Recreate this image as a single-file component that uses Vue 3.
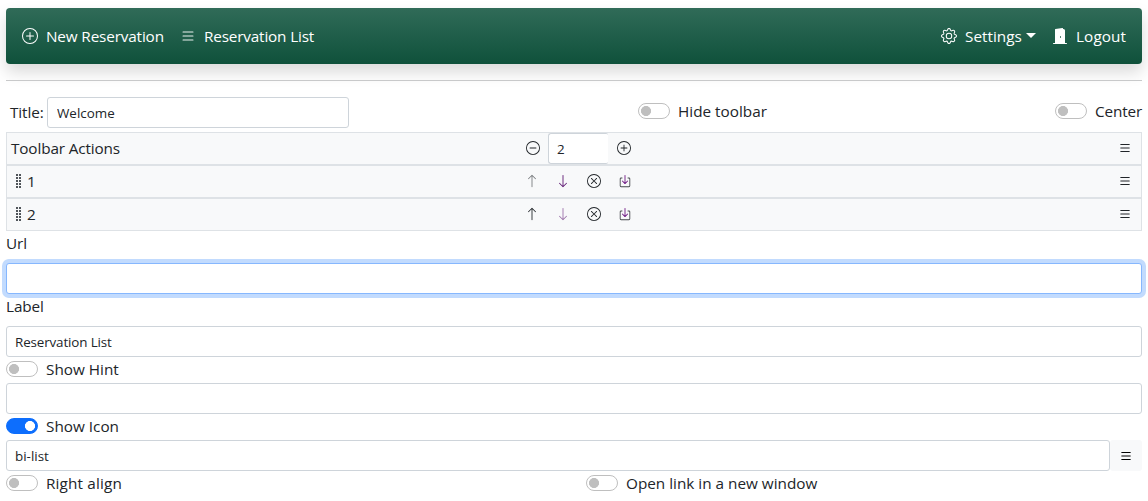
<script setup>
import { ref } from 'vue'

const icons = {
  plus: ['M8 15A7 7 0 1 1 8 1a7 7 0 0 1 0 14m0 1A8 8 0 1 0 8 0a8 8 0 0 0 0 16', 'M8 4a.5.5 0 0 1 .5.5v3h3a.5.5 0 0 1 0 1h-3v3a.5.5 0 0 1-1 0v-3h-3a.5.5 0 0 1 0-1h3v-3A.5.5 0 0 1 8 4'],
  dash: ['M8 15A7 7 0 1 1 8 1a7 7 0 0 1 0 14m0 1A8 8 0 1 0 8 0a8 8 0 0 0 0 16', 'M4 8a.5.5 0 0 1 .5-.5h7a.5.5 0 0 1 0 1h-7A.5.5 0 0 1 4 8'],
  close: ['M8 15A7 7 0 1 1 8 1a7 7 0 0 1 0 14m0 1A8 8 0 1 0 8 0a8 8 0 0 0 0 16', 'M4.646 4.646a.5.5 0 0 1 .708 0L8 7.293l2.646-2.647a.5.5 0 0 1 .708.708L8.707 8l2.647 2.646a.5.5 0 0 1-.708.708L8 8.707l-2.646 2.647a.5.5 0 0 1-.708-.708L7.293 8 4.646 5.354a.5.5 0 0 1 0-.708'],
  list: ['M2.5 12a.5.5 0 0 1 .5-.5h10a.5.5 0 0 1 0 1H3a.5.5 0 0 1-.5-.5m0-4a.5.5 0 0 1 .5-.5h10a.5.5 0 0 1 0 1H3a.5.5 0 0 1-.5-.5m0-4a.5.5 0 0 1 .5-.5h10a.5.5 0 0 1 0 1H3a.5.5 0 0 1-.5-.5'],
  up: ['M8 15a.5.5 0 0 0 .5-.5V2.707l3.146 3.147a.5.5 0 0 0 .708-.708l-4-4a.5.5 0 0 0-.708 0l-4 4a.5.5 0 1 0 .708.708L7.5 2.707V14.5a.5.5 0 0 0 .5.5'],
  down: ['M8 1a.5.5 0 0 1 .5.5v11.793l3.146-3.147a.5.5 0 0 1 .708.708l-4 4a.5.5 0 0 1-.708 0l-4-4a.5.5 0 0 1 .708-.708L7.5 13.293V1.5A.5.5 0 0 1 8 1'],
  insert: ['M3.5 4A1.5 1.5 0 0 0 2 5.5v8A1.5 1.5 0 0 0 3.5 15h9a1.5 1.5 0 0 0 1.500-1.500v-8A1.5 1.5 0 0 0 12.500 4H11v1h1.500a.5.5 0 0 1 .5.5v8a.5.5 0 0 1-.5.5h-9a.5.5 0 0 1-.5-.5v-8a.5.5 0 0 1 .5-.5H5V4z', 'M7.646 11.354a.5.5 0 0 0 .708 0l3-3a.5.5 0 0 0-.708-.708L8.500 9.793V1.500a.5.5 0 0 0-1 0v8.293L5.354 7.646a.5.5 0 1 0-.708.708z'],
  gear: ['M8 4.754a3.246 3.246 0 1 0 0 6.492 3.246 3.246 0 0 0 0-6.492M5.754 8a2.246 2.246 0 1 1 4.492 0 2.246 2.246 0 0 1-4.492 0', 'M9.796 1.343c-.527-1.790-3.065-1.790-3.592 0l-.094.319a.873.873 0 0 1-1.255.52l-.292-.16c-1.640-.892-3.433.902-2.540 2.541l.159.292a.873.873 0 0 1-.52 1.255l-.319.094c-1.790.527-1.790 3.065 0 3.592l.319.094a.873.873 0 0 1 .52 1.255l-.16.292c-.892 1.640.901 3.434 2.541 2.540l.292-.159a.873.873 0 0 1 1.255.52l.094.319c.527 1.790 3.065 1.790 3.592 0l.094-.319a.873.873 0 0 1 1.255-.52l.292.16c1.640.893 3.434-.902 2.540-2.541l-.159-.292a.873.873 0 0 1 .52-1.255l.319-.094c1.790-.527 1.790-3.065 0-3.592l-.319-.094a.873.873 0 0 1-.52-1.255l.16-.292c.893-1.640-.902-3.433-2.541-2.540l-.292.159a.873.873 0 0 1-1.255-.52zm-2.633.283c.246-.835 1.428-.835 1.674 0l.094.319a1.873 1.873 0 0 0 2.693 1.115l.291-.16c.764-.415 1.600.42 1.184 1.185l-.159.292a1.873 1.873 0 0 0 1.116 2.692l.318.094c.835.246.835 1.428 0 1.674l-.319.094a1.873 1.873 0 0 0-1.115 2.693l.16.291c.415.764-.42 1.600-1.185 1.184l-.291-.159a1.873 1.873 0 0 0-2.693 1.116l-.094.318c-.246.835-1.428.835-1.674 0l-.094-.319a1.873 1.873 0 0 0-2.692-1.115l-.292.16c-.764.415-1.600-.42-1.184-1.185l.159-.291A1.873 1.873 0 0 0 1.945 8.930l-.319-.094c-.835-.246-.835-1.428 0-1.674l.319-.094A1.873 1.873 0 0 0 3.060 4.377l-.16-.292c-.415-.764.42-1.600 1.185-1.184l.292.159a1.873 1.873 0 0 0 2.692-1.115z'],
  door: ['M1.500 15a.5.5 0 0 0 0 1h13a.5.5 0 0 0 0-1H13V2.500A1.500 1.500 0 0 0 11.500 1H11V.5a.5.5 0 0 0-.57-.495l-7 1A.5.5 0 0 0 3 1.500V15zM8.500 10c-.276 0-.5-.448-.5-1s.224-1 .5-1 .5.448.5 1-.224 1-.5 1'],
}

const title = ref('Welcome')
const count = ref('2')
const url = ref('')
const label = ref('Reservation List')
const hint = ref('')
const iconName = ref('bi-list')
const rows = [
  { id: 1, first: true, last: false },
  { id: 2, first: false, last: true },
]
</script>

<template>
  <main class="page">
    <nav class="navbar">
      <a class="nav-link"><svg class="icon nav-icon" viewBox="0 0 16 16"><path v-for="d in icons.plus" :key="d" :d="d" /></svg><span class="t-new">New Reservation</span></a>
      <a class="nav-link"><svg class="icon nav-icon soft" viewBox="0 0 16 16"><path v-for="d in icons.list" :key="d" :d="d" /></svg><span class="t-list">Reservation List</span></a>
      <a class="nav-link settings"><svg class="icon nav-icon" viewBox="0 0 16 16"><path v-for="d in icons.gear" :key="d" :d="d" /></svg><span class="t-settings">Settings</span><i class="caret"></i></a>
      <a class="nav-link logout"><svg class="icon nav-icon" viewBox="0 0 16 16"><path v-for="d in icons.door" :key="d" :d="d" /></svg><span class="t-logout">Logout</span></a>
    </nav>
    <div class="rule"></div>

    <div class="title-row">
      <label class="title-label">Title:</label>
      <input v-model="title" class="field title-input" />
      <div class="check hide-check"><i class="switch"></i><span>Hide toolbar</span></div>
      <div class="check center-check"><i class="switch"></i><span class="t-center">Center</span></div>
    </div>

    <div class="actions">
      <div class="bar">
        <span class="bar-name">Toolbar Actions</span>
        <span class="cell"><svg class="icon" viewBox="0 0 16 16"><path v-for="d in icons.dash" :key="d" :d="d" /></svg></span>
        <input v-model="count" class="field count" />
        <span class="cell"><svg class="icon" viewBox="0 0 16 16"><path v-for="d in icons.plus" :key="d" :d="d" /></svg></span>
        <span class="cell menu"><svg class="icon" viewBox="0 0 16 16"><path v-for="d in icons.list" :key="d" :d="d" /></svg></span>
      </div>
      <div v-for="row in rows" :key="row.id" class="bar">
        <span class="bar-name item"><i class="grip"></i>{{ row.id }}</span>
        <span class="cell" :class="{ disabled: row.first }"><svg class="icon" viewBox="0 0 16 16"><path :d="icons.up[0]" /></svg></span>
        <span class="cell purple" :class="{ disabled: row.last }"><svg class="icon" viewBox="0 0 16 16"><path :d="icons.down[0]" /></svg></span>
        <span class="cell"><svg class="icon" viewBox="0 0 16 16"><path v-for="d in icons.close" :key="d" :d="d" /></svg></span>
        <span class="cell"><svg class="icon" viewBox="0 0 16 16"><path class="frame" :d="icons.insert[0]" /><path class="violet" :d="icons.insert[1]" /></svg></span>
        <span class="cell menu"><svg class="icon" viewBox="0 0 16 16"><path v-for="d in icons.list" :key="d" :d="d" /></svg></span>
      </div>
    </div>

    <label class="form-label">Url</label>
    <input v-model="url" class="field wide focused" />
    <label class="form-label">Label</label>
    <input v-model="label" class="field wide" />
    <div class="check"><i class="switch"></i><span>Show Hint</span></div>
    <input v-model="hint" class="field wide" />
    <div class="check"><i class="switch on"></i><span>Show Icon</span></div>
    <div class="group">
      <input v-model="iconName" class="field" />
      <button class="pick"><svg class="icon" viewBox="0 0 16 16"><path v-for="d in icons.list" :key="d" :d="d" /></svg></button>
    </div>
    <div class="bottom">
      <div class="check"><i class="switch"></i><span class="t-align">Right align</span></div>
      <div class="check"><i class="switch"></i><span>Open link in a new window</span></div>
    </div>
  </main>
</template>

<style>
body { margin: 0; background: #fff; overflow: hidden; }
</style>

<style scoped>
* { box-sizing: border-box; }
.page { padding: 8px 6px 0; font-family: "Open Sans", "Noto Sans", sans-serif; font-size: 15.3px; line-height: 24px; color: #212529; }
.icon { display: block; width: 14px; height: 14px; fill: currentColor; flex: none; }
.navbar { display: flex; align-items: center; height: 56px; padding: 0 16px; border-radius: 4px; background: linear-gradient(180deg, #306b58, #0f513b); box-shadow: 0 8px 16px rgba(0, 0, 0, .15); color: #fff; }
.nav-link { display: flex; align-items: center; height: 24px; margin-right: 16px; white-space: nowrap; }
.nav-icon { width: 16px; height: 16px; margin-right: 8px; }
.soft { opacity: .9; }
.t-new { width: 118px; letter-spacing: -.15px; }
.t-list { width: 110px; letter-spacing: -.17px; }
.t-settings { width: 57px; }
.t-logout { width: 50px; letter-spacing: .1px; }
.settings { margin-left: auto; }
.logout { margin-right: 0; }
.caret { margin: -2px 0 0 4px; border: 5px solid transparent; border-top-color: #fff; border-bottom: 0; }
.rule { height: 1px; margin: 16px 0; background: #c8c9ca; }
.title-row { display: flex; align-items: center; height: 31px; padding-left: 4px; }
.title-label { width: 37px; margin-top: -1px; letter-spacing: -.1px; }
.field { display: block; height: 31px; margin: 0; padding: 4px 8px; border: 1px solid #ced4da; border-radius: 3px; outline: 0; background: #fff; color: #212529; font: 13.4px/21px "Open Sans", "Noto Sans", sans-serif; letter-spacing: -.13px; }
.title-input { width: 302px; padding-left: 9px; letter-spacing: 0; }
.wide { width: 100%; }
.focused { border-color: #86b7fe; box-shadow: 0 0 0 4px rgba(13, 110, 253, .25); }
.check { display: flex; height: 24px; margin-bottom: 2px; white-space: nowrap; }
.title-row .check { margin: -3px 0 0; }
.title-row .hide-check { margin-left: 289px; }
.title-row .center-check { margin-left: auto; }
.t-center { width: 47px; letter-spacing: -.15px; }
.t-align { letter-spacing: .15px; }
.switch { width: 32px; height: 16px; margin: 4px 8px 0 0; border: 1px solid #bfbfbf; border-radius: 8px; background: radial-gradient(circle at 7px 7px, #bfbfbf 4.7px, transparent 5.3px); flex: none; }
.switch.on { border-color: #0d6efd; background: radial-gradient(circle at 23px 7px, #fff 4.7px, #0d6efd 5.3px); }
.actions { margin-top: 4px; }
.bar { display: flex; align-items: flex-start; height: 33px; border: 1px solid #dee2e6; background: #f8f9fa; }
.bar-name { width: 510px; padding: 3px 0 0 4px; letter-spacing: -.13px; }
.item { display: flex; align-items: center; width: 509px; padding-left: 9px; }
.grip { width: 5px; height: 14px; margin-right: 6px; background: repeating-linear-gradient(90deg, #50555a 0 2px, transparent 2px 3px); mask: repeating-linear-gradient(180deg, #000 0 2px, transparent 2px 3px); }
.cell { display: flex; justify-content: center; width: 31px; padding-top: 8px; }
.menu { margin-left: auto; margin-right: 1px; }
.purple { color: #5b1470; }
.violet { fill: #6b1480; }
.frame { fill: #45494d; }
.disabled { opacity: .6; }
.count { width: 60px; border-right: 0; border-radius: 3px 2px 2px 3px; letter-spacing: 0; }
.form-label { display: block; height: 24px; margin-bottom: 8px; letter-spacing: -.1px; }
.group { display: flex; }
.group .field { width: 1104px; letter-spacing: 0; }
.pick { display: flex; align-items: center; justify-content: center; width: 32px; height: 31px; padding: 0; border: 0; border-radius: 3px; background: #f8f9fa; color: #000; }
.bottom { display: grid; grid-template-columns: 580px 1fr; }
</style>
